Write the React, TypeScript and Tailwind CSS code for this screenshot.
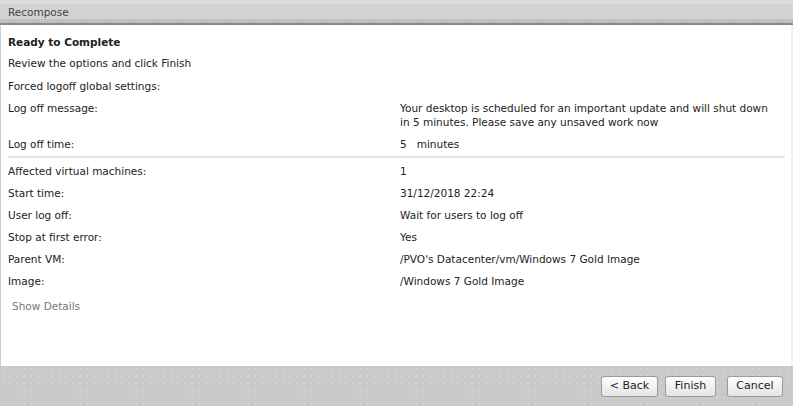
import React from "react";

const rows1 = [
  { label: "Log off message:", value: "Your desktop is scheduled for an important update and will shut down in 5 minutes. Please save any unsaved work now" },
  { label: "Log off time:", value: "5\u00a0\u00a0\u00a0minutes" },
];

const rows2 = [
  { label: "Affected virtual machines:", value: "1" },
  { label: "Start time:", value: "31/12/2018 22:24" },
  { label: "User log off:", value: "Wait for users to log off" },
  { label: "Stop at first error:", value: "Yes" },
  { label: "Parent VM:", value: "/PVO's Datacenter/vm/Windows 7 Gold Image" },
  { label: "Image:", value: "/Windows 7 Gold Image" },
];

function Row({ label, value }: { label: string; value: string }) {
  return (
    <div className="flex py-[4px] leading-[14px]">
      <div className="w-[392px] shrink-0">{label}</div>
      <div className="w-[378px]">{value}</div>
    </div>
  );
}

function Btn({ children, w }: { children: React.ReactNode; w: string }) {
  return (
    <button
      className={`${w} h-[21px] shrink-0 rounded-[3px] border border-[#9a9a9a] bg-gradient-to-b from-[#ffffff] to-[#e4e4e4] text-[11px] text-[#222]`}
    >
      {children}
    </button>
  );
}

export default function App() {
  return (
    <div
      className="w-[793px] h-[406px] flex flex-col bg-white text-[10.5px] text-[#222] overflow-hidden"
      style={{ fontFamily: '"DejaVu Sans", Verdana, sans-serif' }}
    >
      <div className="h-[25px] shrink-0 flex flex-col bg-[#d3d3d3] border-b-2 border-[#8a8a8a]">
        <div className="h-[4px] bg-[#dcdcdc]" />
        <div className="flex-1 px-[8px] pt-[1px] text-[#444] leading-[14px]">Recompose</div>
        <div className="h-[5px] bg-[#bdbdbd] bg-[radial-gradient(#d6d6d6_1px,transparent_1px)] bg-[length:3px_3px]" />
      </div>
      <div className="flex-1 flex flex-col border-l border-[#cfcfcf] border-r-2 border-r-[#f0f0f0] pl-[7px] pt-[6px]">
        <div className="font-bold py-[4px] leading-[14px]">Ready to Complete</div>
        <div className="pt-[3px] pb-[4px] leading-[14px]">Review the options and click Finish</div>
        <div className="py-[4px] leading-[14px] mt-[1px]">Forced logoff global settings:</div>
        {rows1.map((r) => (
          <Row key={r.label} {...r} />
        ))}
        <div className="h-[2px] bg-[#e4e4e4] w-[777px] mt-[1px] mb-[2px]" />
        {rows2.map((r) => (
          <Row key={r.label} {...r} />
        ))}
        <div className="pl-[4px] pt-[7px] text-[#777] leading-[14px]">Show Details</div>
      </div>
      <div className="h-[40px] shrink-0 bg-[#c9c9cb] bg-[radial-gradient(#d5d5d7_1px,transparent_1px)] bg-[length:7px_7px] flex items-center justify-end pr-[10px] pt-[1px]">
        <Btn w="w-[57px]">&lt; Back</Btn>
        <div className="w-[7px]" />
        <Btn w="w-[51px]">Finish</Btn>
        <div className="w-[11px]" />
        <Btn w="w-[56px]">Cancel</Btn>
      </div>
    </div>
  );
}
